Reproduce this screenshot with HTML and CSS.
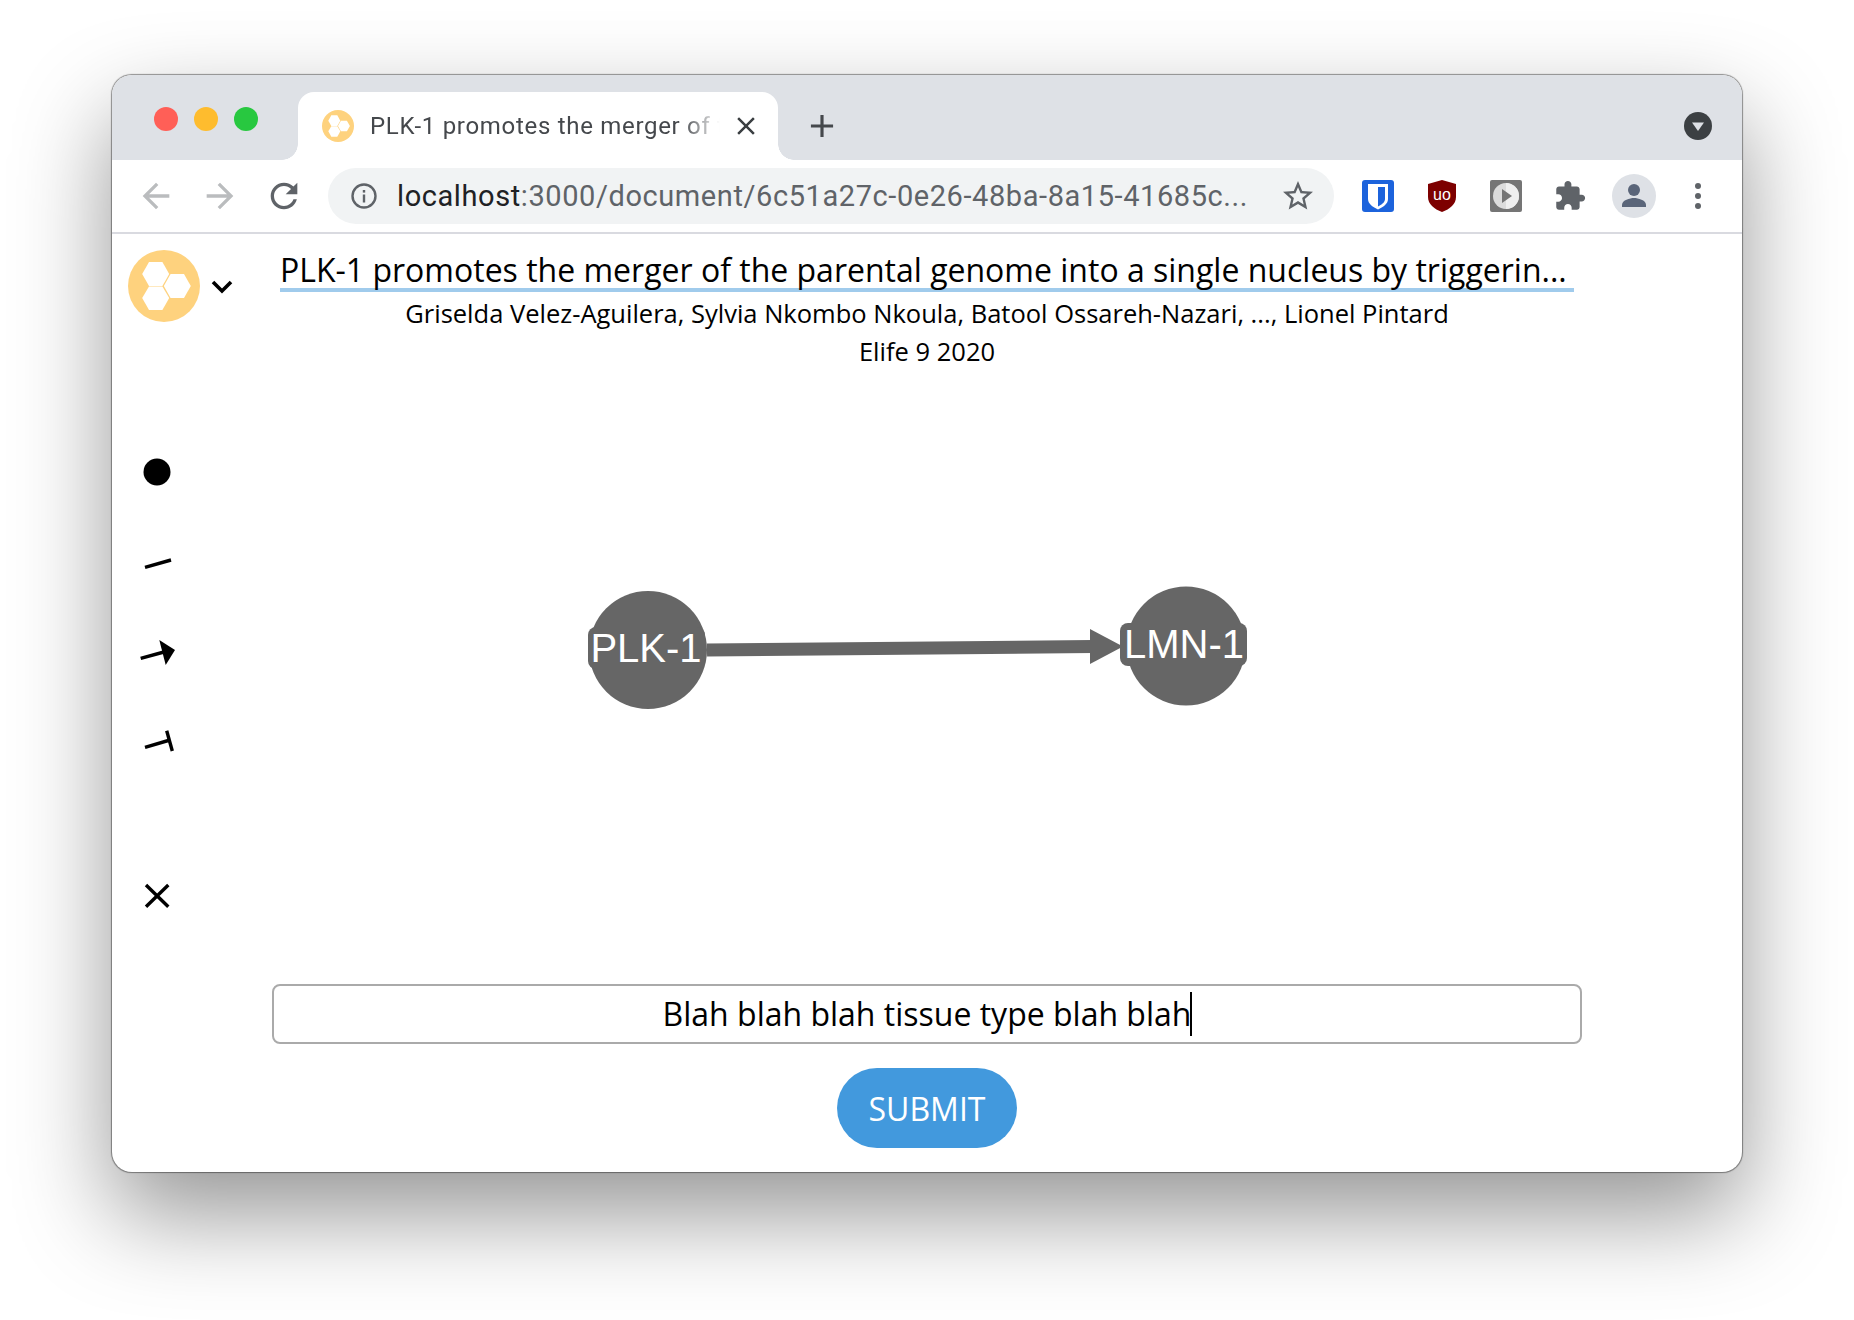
FILE: index.html
```html
<!DOCTYPE html>
<html lang="en">
<head>
    <meta charset="UTF-8">
    <title>PLK-1 promotes the merger of the parental genome</title>
    <link rel="stylesheet" href="styles.css">
</head>
<body>
    <svg class="defs" width="0" height="0">
        <symbol id="logo" viewBox="0 0 72 72">
            <circle cx="36" cy="36" r="36" fill="#fed27e"/>
            <polygon fill="#fff" points="14.2,24 21,12 34.4,12 41.2,24 34.4,36 21,36"/>
            <polygon fill="#fff" points="35.8,36 42.6,24 56,24 62.8,36 56,48 42.6,48"/>
            <polygon fill="#fff" points="14.2,48 21,36.4 34.4,36.4 41.2,48 34.4,60 21,60"/>
        </symbol>
    </svg>

    <div class="window">
        <div class="tabstrip">
            <div class="lights">
                <span class="light red"></span>
                <span class="light yellow"></span>
                <span class="light green"></span>
            </div>
            <div class="tab">
                <svg class="favicon"><use href="#logo"/></svg>
                <span class="tab-title">PLK-1 promotes the merger of t</span>
                <svg class="tab-close" viewBox="0 0 24 24"><path d="M19 6.41L17.59 5 12 10.59 6.41 5 5 6.41 10.59 12 5 17.59 6.41 19 12 13.41 17.59 19 19 17.59 13.41 12z"/></svg>
            </div>
            <svg class="new-tab" viewBox="0 0 24 24"><path d="M19 13h-6v6h-2v-6H5v-2h6V5h2v6h6v2z"/></svg>
            <svg class="tab-search" viewBox="0 0 28 28">
                <circle cx="14" cy="14" r="14" fill="#3c4043"/>
                <polygon points="8,10.5 20,10.5 14,19" fill="#dee1e6"/>
            </svg>
        </div>

        <div class="toolbar">
            <svg class="nav off" viewBox="0 0 24 24"><path d="M20 11H7.83l5.59-5.59L12 4l-8 8 8 8 1.41-1.41L7.83 13H20v-2z"/></svg>
            <svg class="nav off" viewBox="0 0 24 24"><path d="M4 11h12.17l-5.59-5.59L12 4l8 8-8 8-1.41-1.41L16.17 13H4v-2z"/></svg>
            <svg class="nav" viewBox="0 0 24 24"><path d="M17.65 6.35C16.2 4.9 14.21 4 12 4c-4.42 0-7.99 3.58-7.99 8s3.57 8 7.99 8c3.73 0 6.84-2.55 7.73-6h-2.08c-.82 2.33-3.04 4-5.65 4-3.31 0-6-2.69-6-6s2.69-6 6-6c1.66 0 3.14.69 4.22 1.78L13 11h7V4l-2.35 2.35z"/></svg>

            <div class="address">
                <svg class="info" viewBox="0 0 28 28">
                    <circle cx="14" cy="14" r="11.5" fill="none" stroke="#5f6368" stroke-width="2.4"/>
                    <rect x="12.8" y="12.5" width="2.4" height="8" fill="#5f6368"/>
                    <rect x="12.8" y="8" width="2.4" height="2.6" fill="#5f6368"/>
                </svg>
                <span class="url"><span class="host">localhost</span>:3000/document/6c51a27c-0e26-48ba-8a15-41685c...</span>
                <svg class="star" viewBox="0 0 24 24"><path d="M22 9.24l-7.19-.62L12 2 9.19 8.63 2 9.24l5.46 4.73L5.82 21 12 17.27 18.18 21l-1.63-7.03L22 9.24zM12 15.4l-3.76 2.27 1-4.28-3.32-2.88 4.38-.38L12 6.1l1.71 4.04 4.38.38-3.32 2.88 1 4.28L12 15.4z"/></svg>
            </div>

            <div class="actions">
                <svg class="action" viewBox="0 0 44 44">
                    <rect x="6" y="6" width="32" height="32" rx="3" fill="#1c63dc"/>
                    <path d="M12 10h20v15c0 5-5 8-10 10.500c-5-2.500-10-5.500-10-10.500z" fill="#fff"/>
                    <path d="M22 13h7v12c0 3.500-3.500 5.500-7 7.500z" fill="#1c63dc"/>
                </svg>
                <svg class="action" viewBox="0 0 44 44">
                    <path d="M22 6l14 4v13c0 7-6 12-14 15c-8-3-14-8-14-15V10z" fill="#7d0000"/>
                    <text class="ublock" x="22" y="26" text-anchor="middle">uo</text>
                </svg>
                <svg class="action" viewBox="0 0 44 44">
                    <rect x="6" y="6" width="32" height="32" rx="2" fill="#757575"/>
                    <circle cx="22" cy="22" r="13" fill="#dcdcdc"/>
                    <path d="M22 9a13 13 0 0 1 0 26z" fill="#efefef"/>
                    <polygon points="18,15 28,22 18,29" fill="#757575"/>
                </svg>
                <svg class="action" viewBox="-4 -4 32 32"><path fill="#5f6368" d="M20.500 11H19V7c0-1.100-.9-2-2-2h-4V3.500C13 2.120 11.880 1 10.500 1S8 2.120 8 3.500V5H4c-1.100 0-1.990.9-1.990 2v3.800H3.500c1.490 0 2.700 1.210 2.700 2.700s-1.210 2.700-2.700 2.700H2V20c0 1.100.9 2 2 2h3.800v-1.500c0-1.490 1.210-2.700 2.700-2.700 1.490 0 2.700 1.210 2.700 2.700V22H17c1.100 0 2-.9 2-2v-4h1.500c1.380 0 2.500-1.120 2.500-2.500S21.880 11 20.500 11z"/></svg>
                <svg class="action" viewBox="0 0 44 44">
                    <circle cx="22" cy="22" r="22" fill="#dee1e6"/>
                    <circle cx="22" cy="16" r="6" fill="#5a6579"/>
                    <path d="M10 33v-2c0-5 8-7 12-7s12 2 12 7v2z" fill="#5a6579"/>
                </svg>
                <svg class="action" viewBox="0 0 44 44">
                    <circle cx="22" cy="12" r="3" fill="#5f6368"/>
                    <circle cx="22" cy="22" r="3" fill="#5f6368"/>
                    <circle cx="22" cy="32" r="3" fill="#5f6368"/>
                </svg>
            </div>
        </div>

        <div class="page">
            <aside class="sidebar">
                <div class="brand">
                    <svg class="brand-logo"><use href="#logo"/></svg>
                    <svg class="brand-menu" viewBox="0 0 22 14"><path d="M2 2l9 9 9-9" fill="none" stroke="#000" stroke-width="3.600"/></svg>
                </div>
                <div class="tools">
                    <svg class="tool tool-node" viewBox="0 0 44 44"><circle cx="22" cy="22" r="13.500"/></svg>
                    <svg class="tool" viewBox="0 0 44 44"><path d="M10 25.300L36 18" class="tool-line"/></svg>
                    <svg class="tool" viewBox="0 0 44 44">
                        <path d="M5.700 28.300L29 22" class="tool-line"/>
                        <polygon points="24.300,10 40,20 30.700,35"/>
                    </svg>
                    <svg class="tool" viewBox="0 0 44 44">
                        <path d="M10 29.300L35 22" class="tool-line"/>
                        <path d="M31.700 12.700L37.300 33" class="tool-line"/>
                    </svg>
                    <svg class="tool tool-clear" viewBox="0 0 44 44"><path d="M11 11L33.300 32.700M33.300 11L11 32.700" class="tool-line"/></svg>
                </div>
            </aside>

            <main class="main">
                <h1 class="title">PLK-1 promotes the merger of the parental genome into a single nucleus by triggerin...</h1>
                <p class="authors">Griselda Velez-Aguilera, Sylvia Nkombo Nkoula, Batool Ossareh-Nazari, ..., Lionel Pintard</p>
                <p class="journal">Elife 9 2020</p>

                <svg class="graph" viewBox="0 0 1308 614">
                    <path class="edge" d="M434 280L820 276.500"/>
                    <polygon class="shape" points="817,259 850,276.500 817,294"/>
                    <circle class="shape" cx="375" cy="280" r="59"/>
                    <rect class="shape" x="315" y="257" width="117" height="42" rx="8"/>
                    <text class="node-label" x="373" y="292">PLK-1</text>
                    <circle class="shape" cx="913" cy="276" r="59.500"/>
                    <rect class="shape" x="847" y="253" width="127" height="43" rx="8"/>
                    <text class="node-label" x="911" y="288">LMN-1</text>
                </svg>

                <div class="entry"><span class="entry-text">Blah blah blah tissue type blah blah</span><span class="caret"></span></div>
                <button class="submit" type="button">SUBMIT</button>
            </main>
        </div>
    </div>
</body>
</html>
```

FILE: styles.css
```css
* {
    box-sizing: border-box;
    margin: 0;
    padding: 0;
}

html,
body {
    background-color: #fff;
    height: 1320px;
    overflow: hidden;
}

body {
    padding: 75px 0 0 112px;
    font-family: "Open Sans", sans-serif;
}

.defs {
    display: block;
    height: 0;
}

.window {
    display: flex;
    flex-direction: column;
    width: 1630px;
    height: 1097px;
    border-radius: 20px;
    overflow: hidden;
    background-color: #fff;
    box-shadow: 0 0 1px 0.5px rgba(0, 0, 0, 0.4), 0 42px 96px rgba(0, 0, 0, 0.42);
}

/* tab strip */

.tabstrip {
    display: flex;
    align-items: center;
    height: 85px;
    padding-top: 17px;
    background-color: #dee1e6;
}

.lights {
    display: flex;
    gap: 16px;
    margin: -14px 40px 0 42px;
}

.light {
    width: 24px;
    height: 24px;
    border-radius: 50%;
}

.red {
    background-color: #ff5f57;
}

.yellow {
    background-color: #febc2e;
}

.green {
    background-color: #28c840;
}

.tab {
    position: relative;
    display: flex;
    align-items: center;
    width: 480px;
    height: 68px;
    padding-left: 24px;
    background-color: #fff;
    border-radius: 16px 16px 0 0;
}

.tab::before,
.tab::after {
    content: "";
    position: absolute;
    bottom: 0;
    width: 16px;
    height: 16px;
    background: radial-gradient(circle at 0 0, #dee1e6 15.500px, #fff 16px);
}

.tab::before {
    left: -16px;
}

.tab::after {
    right: -16px;
    background: radial-gradient(circle at 100% 0, #dee1e6 15.500px, #fff 16px);
}

.favicon {
    flex: none;
    width: 32px;
    height: 32px;
    margin-right: 16px;
}

.tab-title {
    flex: none;
    width: 350px;
    white-space: nowrap;
    font-family: Roboto, sans-serif;
    font-size: 24px;
    letter-spacing: 0.7px;
    color: #45484c;
    -webkit-mask-image: linear-gradient(to right, #000 312px, transparent 350px);
    mask-image: linear-gradient(to right, #000 312px, transparent 350px);
}

.tab-close {
    flex: none;
    width: 30px;
    height: 30px;
    margin-left: 11px;
    fill: #3c4043;
}

.new-tab {
    width: 38px;
    height: 38px;
    margin-left: 25px;
    fill: #45484c;
}

.tab-search {
    width: 28px;
    height: 28px;
    margin: 0 30px 0 auto;
}

/* toolbar */

.toolbar {
    display: flex;
    align-items: center;
    gap: 24px;
    height: 74px;
    padding-left: 24px;
    background-color: #fff;
    border-bottom: 2px solid #d9dae0;
}

.nav {
    flex: none;
    width: 40px;
    height: 40px;
    fill: #5f6368;
}

.nav.off {
    fill: #babcbe;
}

.address {
    display: flex;
    align-items: center;
    flex: none;
    width: 1006px;
    height: 56px;
    padding: 0 18px 0 22px;
    background-color: #f1f3f4;
    border-radius: 28px;
}

.info {
    flex: none;
    width: 28px;
    height: 28px;
    margin-right: 19px;
}

.url {
    flex: 1;
    white-space: nowrap;
    font-family: Roboto, sans-serif;
    font-size: 29px;
    letter-spacing: 0.58px;
    color: #5f6368;
}

.host {
    color: #202124;
}

.star {
    flex: none;
    width: 36px;
    height: 36px;
    fill: #5f6368;
}

.actions {
    display: flex;
    gap: 20px;
    margin-left: -2px;
}

.action {
    display: block;
    width: 44px;
    height: 44px;
}

.ublock {
    font-family: "Liberation Sans", sans-serif;
    font-size: 16px;
    fill: #fff;
}

/* page */

.page {
    display: flex;
    flex: 1;
}

.sidebar {
    flex: none;
    width: 160px;
    padding-top: 16px;
}

.brand {
    display: flex;
    align-items: center;
    padding-left: 16px;
}

.brand-logo {
    width: 72px;
    height: 72px;
}

.brand-menu {
    width: 22px;
    height: 14px;
    margin: 2px 0 0 11px;
}

.tools {
    display: flex;
    flex-direction: column;
    margin: 128px 0 0 23px;
    gap: 44px;
}

.tool {
    display: block;
    width: 44px;
    height: 44px;
}

.tool-node {
    margin-bottom: 4px;
}

.tool-clear {
    margin-top: 68px;
}

.tool-line {
    fill: none;
    stroke: #000;
    stroke-width: 3.400;
}

.main {
    display: flex;
    flex-direction: column;
    align-items: center;
    flex: none;
    width: 1310px;
    padding-top: 14px;
}

.title {
    width: 1294px;
    height: 44px;
    border-bottom: 4px solid #a0cbec;
    font-size: 32px;
    font-weight: 400;
    line-height: 44px;
    white-space: nowrap;
    color: #000;
}

.authors,
.journal {
    font-size: 25.500px;
    line-height: 38px;
    color: #000;
    white-space: nowrap;
}

.authors {
    margin-top: 2px;
}

.graph {
    display: block;
    width: 1308px;
    height: 614px;
}

.shape {
    fill: #666;
}

.edge {
    fill: none;
    stroke: #666;
    stroke-width: 13;
}

.node-label {
    font-family: "Liberation Sans", sans-serif;
    font-size: 40px;
    text-anchor: middle;
    fill: #fff;
}

.entry {
    display: flex;
    align-items: center;
    justify-content: center;
    width: 1310px;
    height: 60px;
    border: 2px solid #aaa;
    border-radius: 8px;
    font-size: 32px;
    white-space: nowrap;
    color: #000;
}

.entry-text {
    margin: -2px 0 0 1px;
}

.caret {
    width: 2px;
    height: 44px;
    margin-left: -1px;
    background-color: #000;
}

.submit {
    width: 180px;
    height: 80px;
    margin-top: 24px;
    border: none;
    border-radius: 40px;
    background-color: #4299dd;
    font-family: "Open Sans", sans-serif;
    font-size: 32px;
    color: #fff;
}
```
